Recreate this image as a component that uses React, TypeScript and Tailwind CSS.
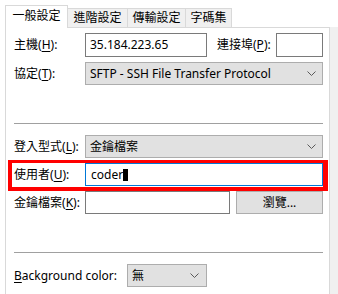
import React from "react";

const tabs = [
	{ name: "一般設定", w: "w-[63px]", active: true },
	{ name: "進階設定", w: "w-[61px]" },
	{ name: "傳輸設定", w: "w-[59px]" },
	{ name: "字碼集", w: "w-[47px]" },
];

function Chevron() {
	return (
		<svg width="9" height="5" viewBox="0 0 9 5" className="shrink-0">
			<path d="M0.5 0.5 L4.5 4.5 L8.5 0.5" fill="none" stroke="#5a5a5a" strokeWidth="1" />
		</svg>
	);
}

function Label({ text, hot, rest }: { text: string; hot: string; rest?: string }) {
	return (
		<span className="w-[71px] shrink-0 whitespace-nowrap">
			{text}(<span className="underline underline-offset-2">{hot}</span>){rest ?? ":"}
		</span>
	);
}

export default function App() {
	return (
		<div
			className="relative w-[338px] h-[294px] overflow-hidden bg-white text-[12px] text-black"
			style={{ fontFamily: '"Noto Sans", "Noto Sans CJK TC", sans-serif' }}
		>
			{/* strip right of the panel */}
			<div className="absolute right-0 top-[27px] bottom-0 w-[8px] bg-[#f0f0f0]" />

			<div className="flex items-end h-[28px] pl-[5px]">
				{tabs.map((t) =>
					t.active ? (
						<div
							key={t.name}
							className={`${t.w} h-[23px] relative z-10 bg-white border border-b-0 border-[#d9d9d9] flex items-center justify-center pb-[2px]`}
						>
							{t.name}
						</div>
					) : (
						<div
							key={t.name}
							className={`${t.w} h-[20px] -ml-px bg-[#f0f0f0] border border-[#d9d9d9] flex items-center justify-center`}
						>
							{t.name}
						</div>
					)
				)}
			</div>

			<div className="relative -mt-px ml-[5px] w-[325px] h-[272px] bg-white border border-[#d9d9d9] pl-[8px] pr-[6px] pt-[5px]">
				{/* host / port */}
				<div className="flex items-center h-[24px]">
					<Label text="主機" hot="H" />
					<div className="w-[122px] h-[24px] border border-[#7a7a7a] flex items-center pl-[4px]">
						35.184.223.65
					</div>
					<span className="ml-[10px] w-[59px] whitespace-nowrap">
						連接埠(<span className="underline underline-offset-2">P</span>):
					</span>
					<div className="w-[47px] h-[24px] border border-[#7a7a7a]" />
				</div>

				{/* protocol */}
				<div className="flex items-center h-[23px] mt-[5px]">
					<Label text="協定" hot="T" />
					<div className="flex-1 h-[23px] bg-[#e1e1e1] border border-[#adadad] flex items-center justify-between pl-[4px] pr-[6px]">
						<span>SFTP - SSH File Transfer Protocol</span>
						<Chevron />
					</div>
				</div>

				<div className="h-px bg-[#a0a0a0] mt-[38px]" />

				{/* login type */}
				<div className="flex items-center h-[23px] mt-[11px]">
					<Label text="登入型式" hot="L" />
					<div className="flex-1 h-[23px] bg-[#e1e1e1] border border-[#adadad] flex items-center justify-between pl-[4px] pr-[6px]">
						<span>金鑰檔案</span>
						<Chevron />
					</div>
				</div>

				{/* user */}
				<div className="relative flex items-center h-[23px] mt-[5px]">
					<Label text="使用者" hot="U" />
					<div className="flex-1 h-[23px] border border-[#0078d7] flex items-center pl-[5px]">
						<span>coder</span>
						<span className="w-[5px] h-[12px] bg-black" />
					</div>
					<div className="absolute top-[-3px] bottom-[-5px] left-[-6px] right-[-5px] border-[#ff0000] border-t-[3px] border-l-4 border-r-[5px] border-b-4" />
				</div>

				{/* key file */}
				<div className="flex items-center h-[23px] mt-[5px]">
					<Label text="金鑰檔案" hot="K" />
					<div className="w-[145px] h-[23px] border border-[#7a7a7a]" />
					<button className="ml-[6px] w-[87px] h-[23px] bg-[#e1e1e1] border border-[#adadad] flex items-center justify-center">
						瀏覽...
					</button>
				</div>

				<div className="h-px bg-[#a0a0a0] mt-[38px]" />

				{/* background colour */}
				<div className="flex items-center h-[23px] mt-[11px]">
					<span className="w-[113px] shrink-0 whitespace-nowrap">
						<span className="underline underline-offset-2">B</span>ackground color:
					</span>
					<div className="w-[80px] h-[23px] bg-[#e1e1e1] border border-[#adadad] flex items-center justify-between pl-[4px] pr-[7px]">
						<span>無</span>
						<Chevron />
					</div>
				</div>
			</div>
		</div>
	);
}
